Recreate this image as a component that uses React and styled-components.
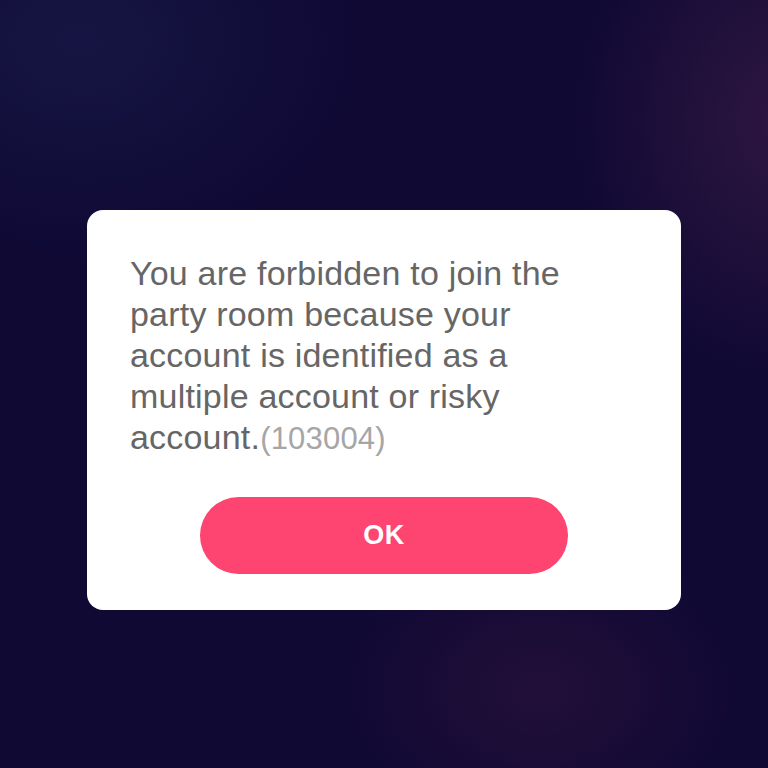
import React from "react";
import styled, { createGlobalStyle } from "styled-components";

const Global = createGlobalStyle`
  html, body { margin: 0; padding: 0; }
  body { font-family: "Liberation Sans", Arial, sans-serif; }
`;

const Screen = styled.div`
  width: 768px;
  height: 768px;
  box-sizing: border-box;
  display: flex;
  flex-direction: column;
  align-items: center;
  padding-top: 210px;
  background:
    radial-gradient(ellipse 320px 380px at 790px 120px, rgba(60, 28, 70, 0.7), rgba(60, 28, 70, 0) 70%),
    radial-gradient(ellipse 300px 220px at 540px 690px, rgba(50, 20, 60, 0.55), rgba(50, 20, 60, 0) 70%),
    radial-gradient(ellipse 420px 320px at 80px 40px, rgba(24, 24, 70, 0.8), rgba(24, 24, 70, 0) 70%),
    #0f0934;
`;

const Dialog = styled.div`
  width: 594px;
  height: 400px;
  box-sizing: border-box;
  background: #ffffff;
  border-radius: 16px;
  padding: 43px 43px 0 43px;
  display: flex;
  flex-direction: column;
`;

const Message = styled.p`
  margin: 0;
  width: 460px;
  font-family: "Liberation Sans", Arial, sans-serif;
  font-size: 34px;
  line-height: 41px;
  font-weight: 400;
  color: #666666;
  letter-spacing: 0.2px;
`;

const Code = styled.span`
  font-size: 31px;
  color: #a6a6a6;
`;

const Button = styled.button`
  align-self: center;
  margin-top: 38px;
  width: 368px;
  height: 77px;
  border: none;
  border-radius: 39px;
  background: #fe4470;
  color: #ffffff;
  font-family: "Liberation Sans", Arial, sans-serif;
  font-size: 27px;
  font-weight: 700;
  letter-spacing: 0.5px;
  cursor: pointer;
`;

export default function App() {
  return (
    <>
      <Global />
      <Screen>
        <Dialog>
          <Message>
            You are forbidden to join the party room because your account is
            identified as a multiple account or risky account.
            <Code>(103004)</Code>
          </Message>
          <Button>OK</Button>
        </Dialog>
      </Screen>
    </>
  );
}
